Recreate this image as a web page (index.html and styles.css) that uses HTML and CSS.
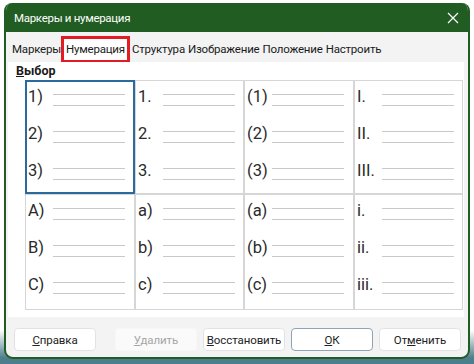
FILE: index.html
```html
<!DOCTYPE html>
<html>
<head>
    <title>Маркеры и нумерация</title>
    <meta charset="utf-8">
    <link rel="stylesheet" href="styles.css">
</head>
<body>
    <div class="dialog">
        <div class="titlebar">
            <span class="title">Маркеры и нумерация</span>
            <svg class="close" width="12" height="12" viewBox="0 0 12 12">
                <path d="M1 1 L11 11 M11 1 L1 11" stroke="#ffffff" stroke-width="1.2" fill="none"/>
            </svg>
        </div>

        <div class="tabs">
            <span class="tab">Маркеры</span>
            <span class="tab active">Нумерация</span>
            <span class="tab">Структура</span>
            <span class="tab">Изображение</span>
            <span class="tab">Положение</span>
            <span class="tab">Настроить</span>
        </div>

        <div class="panel">
            <div class="legend"><u>В</u>ыбор</div>
            <div class="grid">
                <div class="cell selected">
                    <div class="item"><span class="num">1)</span><span class="lines"><i></i><i></i></span></div>
                    <div class="item"><span class="num">2)</span><span class="lines"><i></i><i></i></span></div>
                    <div class="item"><span class="num">3)</span><span class="lines"><i></i><i></i></span></div>
                </div>
                <div class="cell">
                    <div class="item"><span class="num">1.</span><span class="lines"><i></i><i></i></span></div>
                    <div class="item"><span class="num">2.</span><span class="lines"><i></i><i></i></span></div>
                    <div class="item"><span class="num">3.</span><span class="lines"><i></i><i></i></span></div>
                </div>
                <div class="cell">
                    <div class="item"><span class="num">(1)</span><span class="lines"><i></i><i></i></span></div>
                    <div class="item"><span class="num">(2)</span><span class="lines"><i></i><i></i></span></div>
                    <div class="item"><span class="num">(3)</span><span class="lines"><i></i><i></i></span></div>
                </div>
                <div class="cell">
                    <div class="item"><span class="num">I.</span><span class="lines"><i></i><i></i></span></div>
                    <div class="item"><span class="num">II.</span><span class="lines"><i></i><i></i></span></div>
                    <div class="item"><span class="num">III.</span><span class="lines"><i></i><i></i></span></div>
                </div>
                <div class="cell">
                    <div class="item"><span class="num">A)</span><span class="lines"><i></i><i></i></span></div>
                    <div class="item"><span class="num">B)</span><span class="lines"><i></i><i></i></span></div>
                    <div class="item"><span class="num">C)</span><span class="lines"><i></i><i></i></span></div>
                </div>
                <div class="cell">
                    <div class="item"><span class="num">a)</span><span class="lines"><i></i><i></i></span></div>
                    <div class="item"><span class="num">b)</span><span class="lines"><i></i><i></i></span></div>
                    <div class="item"><span class="num">c)</span><span class="lines"><i></i><i></i></span></div>
                </div>
                <div class="cell">
                    <div class="item"><span class="num">(a)</span><span class="lines"><i></i><i></i></span></div>
                    <div class="item"><span class="num">(b)</span><span class="lines"><i></i><i></i></span></div>
                    <div class="item"><span class="num">(c)</span><span class="lines"><i></i><i></i></span></div>
                </div>
                <div class="cell">
                    <div class="item"><span class="num">i.</span><span class="lines"><i></i><i></i></span></div>
                    <div class="item"><span class="num">ii.</span><span class="lines"><i></i><i></i></span></div>
                    <div class="item"><span class="num">iii.</span><span class="lines"><i></i><i></i></span></div>
                </div>
            </div>
        </div>

        <div class="buttons">
            <button class="btn"><u>С</u>правка</button>
            <button class="btn disabled"><u>У</u>далить</button>
            <button class="btn"><u>В</u>осстановить</button>
            <button class="btn default"><u>О</u>К</button>
            <button class="btn">От<u>м</u>енить</button>
        </div>
    </div>
</body>
</html>
```

FILE: styles.css
```css
body {
    margin: 0;
    padding: 0;
    height: 364px;
    overflow: hidden;
    background: linear-gradient(to bottom, #ffffff 0px, #ffffff 330px, #4d7e8c 358px);
    font-family: Roboto, "Noto Sans", sans-serif;
    font-size: 12px;
    color: #1a1a1a;
}

.dialog {
    margin: 3px 4px 0 4px;
    height: 356px;
    box-sizing: border-box;
    border: 2px solid #215d23;
    border-top: 0;
    border-radius: 8px 8px 9px 9px;
    background-color: #f3f3f3;
    display: flex;
    flex-direction: column;
    overflow: hidden;
}

.titlebar {
    height: 29px;
    flex-shrink: 0;
    background-color: #215d23;
    color: #ffffff;
    display: flex;
    align-items: center;
    justify-content: space-between;
    padding: 0 9px 0 8px;
    font-size: 11.5px;
    letter-spacing: -0.3px;
}

.close {
    margin-top: 1px;
}

.tabs {
    height: 30px;
    flex-shrink: 0;
    display: flex;
    align-items: flex-end;
    padding-left: 6px;
    gap: 3px;
    font-size: 11.5px;
    letter-spacing: -0.2px;
}

.tab {
    height: 26px;
    line-height: 26px;
    box-sizing: border-box;
    white-space: nowrap;
}

.tab.active {
    background-color: #ffffff;
    border: 3px solid #e31b23;
    border-bottom-width: 2px;
    padding: 0 2px;
    line-height: 20px;
    margin: 0 -1px 0 -3px;
}

.panel {
    flex: 1;
    background-color: #ffffff;
    margin: 0 4px 0 2px;
    padding: 2px 0 0 8px;
    display: flex;
    flex-direction: column;
}

.legend {
    font-weight: bold;
    font-size: 12.5px;
    height: 16px;
    line-height: 14px;
}

.grid {
    margin: 0 0 0 9px;
    width: 436px;
    display: grid;
    grid-template-columns: 108px 107px 108px 107px;
    grid-template-rows: 112px 114px;
    gap: 2px;
    padding: 1px;
    background-color: #d6d6d6;
}

.cell {
    background-color: #ffffff;
    padding: 4px 0 0 2px;
    overflow: hidden;
    position: relative;
}

.cell.selected {
    outline: 2px solid #2d6a9c;
    outline-offset: -1px;
    z-index: 1;
}

.item {
    height: 37px;
    display: flex;
    align-items: flex-start;
}

.num {
    width: 24px;
    font-size: 16.5px;
    line-height: 24px;
    color: #2a2a2a;
}

.lines {
    display: flex;
    flex-direction: column;
    gap: 10px;
    margin-top: 9px;
    margin-left: 1px;
    width: 72px;
}

.lines i {
    display: block;
    height: 1px;
    background-color: #c9c9c9;
}

.buttons {
    height: 40px;
    flex-shrink: 0;
    box-sizing: border-box;
    display: flex;
    align-items: center;
    padding: 5px 0 0 8px;
    gap: 6px;
}

.btn {
    width: 82px;
    height: 23px;
    box-sizing: border-box;
    background-color: #ffffff;
    border: 1px solid #e2e2e2;
    border-radius: 4px;
    font-family: Roboto, "Noto Sans", sans-serif;
    font-size: 11.5px;
    letter-spacing: -0.1px;
    color: #222222;
    padding: 0;
}

.btn.disabled {
    color: #a6a6a6;
    border-color: #f7f7f7;
    background-color: #fafafa;
    margin-left: 13px;
}

.btn.default {
    border-color: #8ea3b5;
}
```
